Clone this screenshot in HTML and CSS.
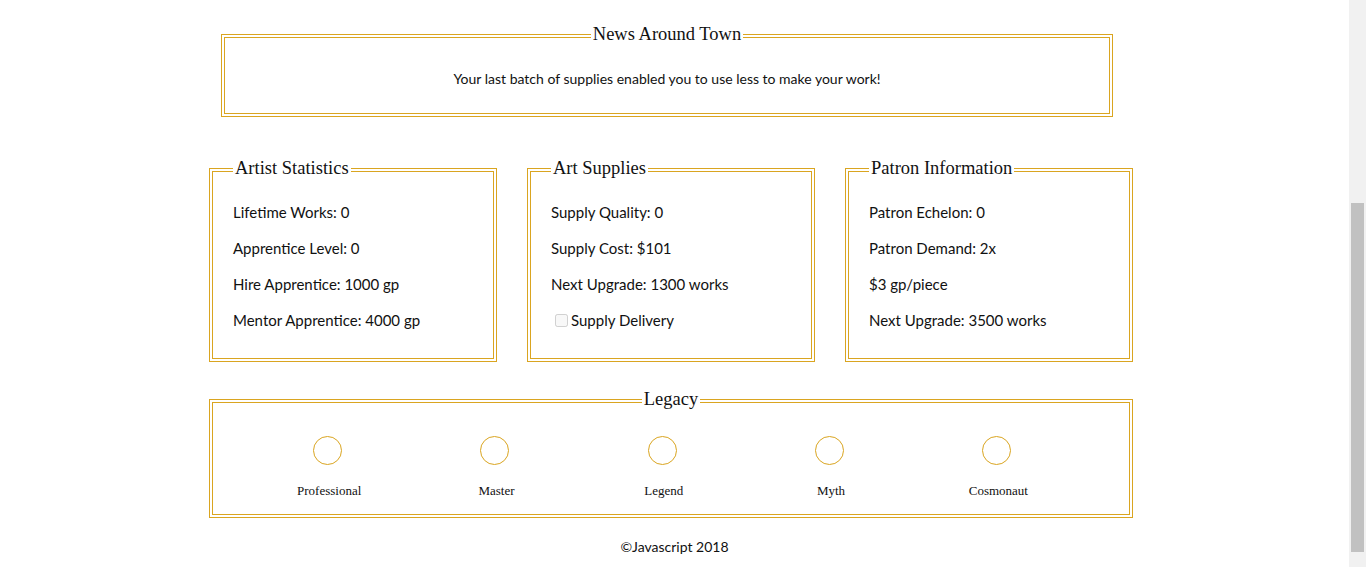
FILE: index.html
```html
<!DOCTYPE html>
<html lang="en">
<head>
<meta charset="utf-8">
<title>Artist Game</title>
<link rel="stylesheet" href="styles.css">
</head>
<body>
<div class="page">
  <fieldset class="box news">
    <legend class="legend-center">News Around Town</legend>
    <p>Your last batch of supplies enabled you to use less to make your work!</p>
  </fieldset>

  <div class="stats-row">
    <fieldset class="box stat">
      <legend>Artist Statistics</legend>
      <p>Lifetime Works: 0</p>
      <p>Apprentice Level: 0</p>
      <p>Hire Apprentice: 1000 gp</p>
      <p>Mentor Apprentice: 4000 gp</p>
    </fieldset>
    <fieldset class="box stat">
      <legend>Art Supplies</legend>
      <p>Supply Quality: 0</p>
      <p>Supply Cost: $101</p>
      <p>Next Upgrade: 1300 works</p>
      <label class="check"><input type="checkbox" disabled>Supply Delivery</label>
    </fieldset>
    <fieldset class="box stat">
      <legend>Patron Information</legend>
      <p>Patron Echelon: 0</p>
      <p>Patron Demand: 2x</p>
      <p>$3 gp/piece</p>
      <p>Next Upgrade: 3500 works</p>
    </fieldset>
  </div>

  <fieldset class="box legacy">
    <legend class="legend-center">Legacy</legend>
    <ul class="ranks">
      <li><span class="ring"></span><span class="rank-name">Professional</span></li>
      <li><span class="ring"></span><span class="rank-name">Master</span></li>
      <li><span class="ring"></span><span class="rank-name">Legend</span></li>
      <li><span class="ring"></span><span class="rank-name">Myth</span></li>
      <li><span class="ring"></span><span class="rank-name">Cosmonaut</span></li>
    </ul>
  </fieldset>
</div>
<footer class="footer">©Javascript 2018</footer>
</body>
</html>
```

FILE: styles.css
```css
html {
  background-color: #fff;
  background-image:
    linear-gradient(#c1c1c1, #c1c1c1),
    linear-gradient(#f1f1f1, #f1f1f1);
  background-repeat: no-repeat;
  background-position: 1351px 203px, 1349px 0;
  background-size: 13px 349px, 17px 100%;
  min-height: 100%;
}

body {
  width: 1349px;
  margin: 0;
  font-family: Lato, "Liberation Sans", sans-serif;
  font-size: 15px;
  color: #111;
}

.page {
  width: 924px;
  margin-left: 209px;
  padding-top: 23px;
}

.box {
  margin: 0;
  border: 4px double #daa520;
  min-width: 0;
}

.box legend {
  font-family: "Liberation Serif", serif;
  font-size: 18.5px;
  line-height: 22px;
  padding: 0 2px 4px;
  color: #111;
}

.legend-center {
  margin: 0 auto;
}

.box p {
  margin: 0;
  line-height: 20px;
}

.news {
  margin: 0 20px 0 12px;
  padding: 20px 20px 24px;
  text-align: center;
}

.news p {
  font-size: 14px;
}

.stats-row {
  display: flex;
  gap: 30px;
  margin-top: 40px;
}

.stat {
  flex: 0 0 288px;
  box-sizing: border-box;
  padding: 19px 20px 28px;
  display: flex;
  flex-direction: column;
  gap: 16px;
}

.stat legend {
  margin-left: 0;
}

.check {
  display: flex;
  align-items: center;
  line-height: 20px;
}

.check input {
  width: 13px;
  height: 13px;
  margin: 3px 3px 3px 4px;
}

.legacy {
  margin-top: 26px;
  padding: 22px 20px 15px;
}

.ranks {
  list-style: none;
  margin: 0;
  padding: 0 0 0 11px;
  display: grid;
  grid-template-columns: repeat(5, 167.3px);
}

.ranks li {
  display: flex;
  flex-direction: column;
  align-items: center;
  gap: 18px;
}

.ring {
  width: 27px;
  height: 27px;
  border: 1px solid #daa520;
  border-radius: 50%;
}

.rank-name {
  font-family: "Liberation Serif", serif;
  font-size: 13px;
  line-height: 16px;
  padding-left: 3px;
}

.footer {
  text-align: center;
  font-size: 14px;
  line-height: 20px;
  padding: 19px 0 10px;
}
```
